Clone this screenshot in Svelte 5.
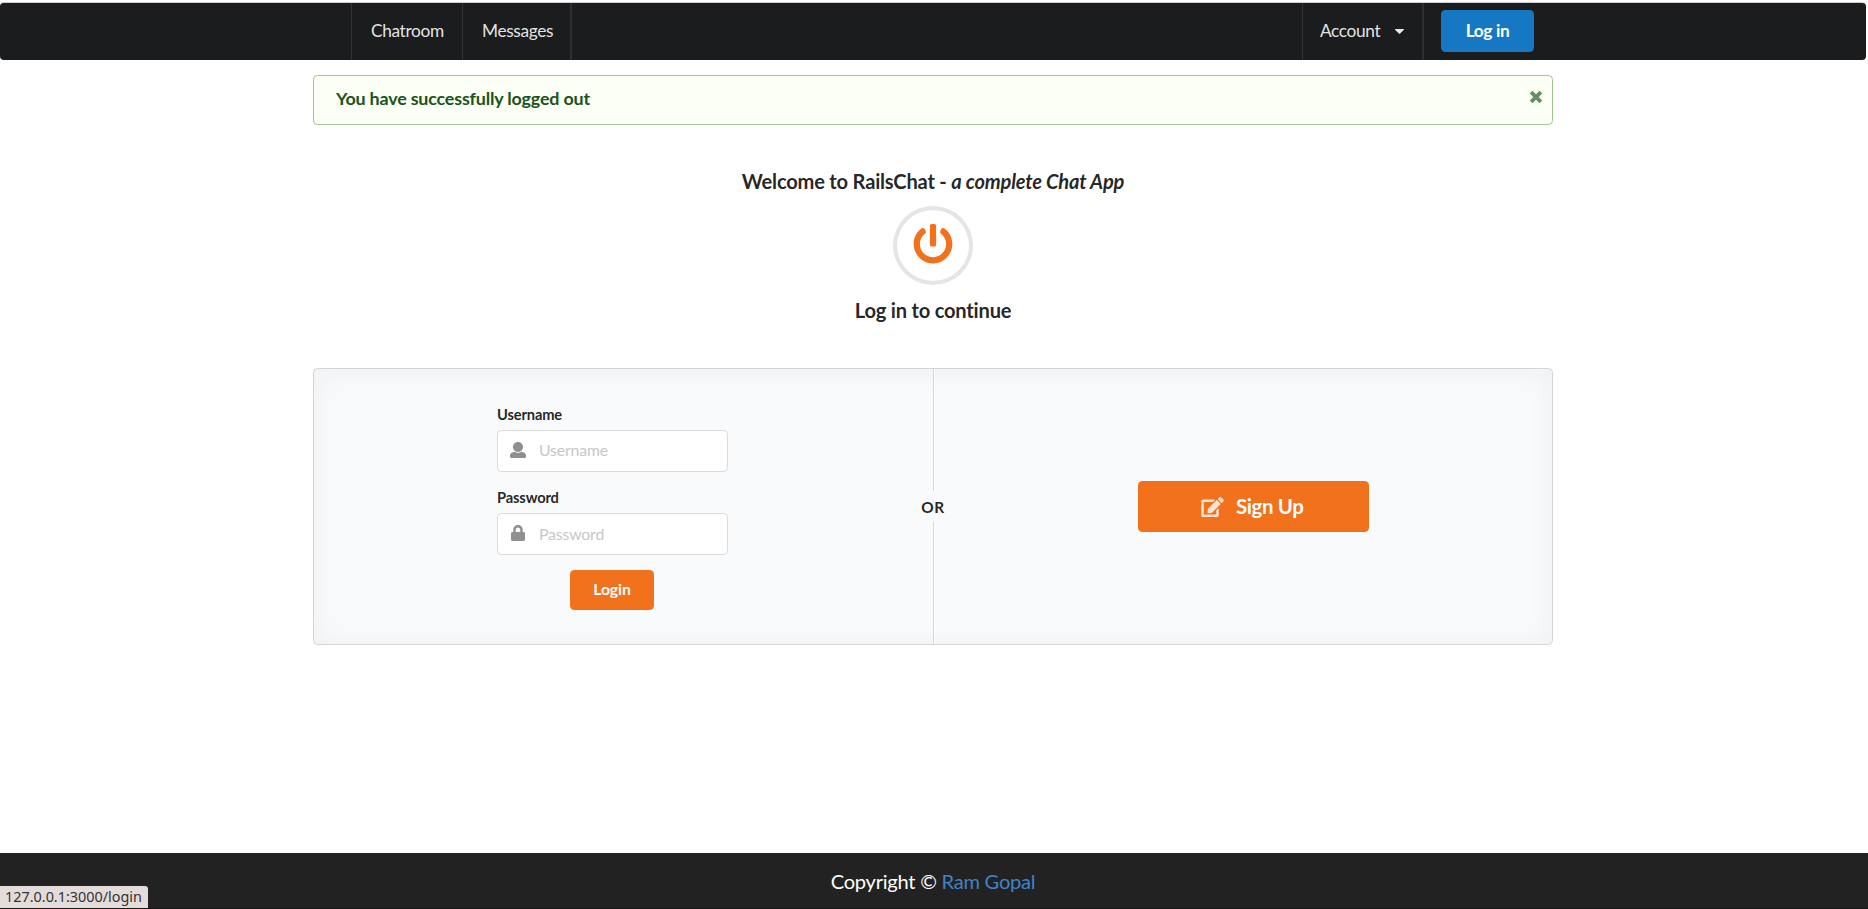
<script>
  let username = $state('');
  let password = $state('');
  const icons = {
    user: 'M256 0c88.366 0 160 71.634 160 160s-71.634 160-160 160S96 248.366 96 160 167.634 0 256 0zm183.283 333.821l-71.313-17.828c-74.923 53.89-165.738 41.864-223.94 0l-71.313 17.828C29.981 344.505 0 382.903 0 426.955V464c0 26.51 21.49 48 48 48h416c26.51 0 48-21.49 48-48v-37.045c0-44.052-29.981-82.45-72.717-93.134z',
    lock: 'M400 224h-24v-72C376 68.2 307.8 0 224 0S72 68.2 72 152v72H48c-26.5 0-48 21.5-48 48v192c0 26.5 21.5 48 48 48h352c26.5 0 48-21.5 48-48V272c0-26.5-21.5-48-48-48zm-104 0H152v-72c0-39.7 32.3-72 72-72s72 32.3 72 72v72z',
    edit: 'M402.6 83.2l90.2 90.2c3.8 3.8 3.8 10 0 13.8L274.4 405.6l-92.8 10.3c-12.4 1.4-22.9-9.1-21.5-21.5l10.3-92.8L388.8 83.2c3.8-3.8 10-3.8 13.8 0zm162-22.9l-48.8-48.8c-15.2-15.2-39.9-15.2-55.2 0l-35.4 35.4c-3.8 3.8-3.8 10 0 13.8l90.2 90.2c3.8 3.8 10 3.8 13.8 0l35.4-35.4c15.2-15.3 15.2-40 0-55.2zM384 346.2V448H64V128h229.8c3.2 0 6.2-1.3 8.5-3.5l40-40c7.6-7.6 2.2-20.5-8.5-20.5H48C21.5 64 0 85.5 0 112v352c0 26.5 21.5 48 48 48h352c26.5 0 48-21.5 48-48V306.2c0-10.7-12.9-16-20.5-8.5l-40 40c-2.2 2.3-3.5 5.3-3.5 8.5z',
    power: 'M400 54.1c63 45 104 118.6 104 201.9 0 136.8-110.8 247.7-247.5 248C120 504.3 8.2 393 8 256.4 7.9 173.1 48.9 99.3 111.8 54.2c11.7-8.3 28-4.8 35 7.7L162.6 90c5.9 10.5 3.1 23.8-6.6 31-41.5 30.8-68 79.6-68 134.9-.1 92.3 74.5 168.1 168 168.1 91.6 0 168.6-74.2 168-169.1-.3-51.8-24.7-101.8-68.1-134-9.7-7.2-12.4-20.5-6.5-30.9l15.8-28.1c7-12.4 23.2-16.1 34.8-7.8zM296 264V24c0-13.3-10.7-24-24-24h-32c-13.3 0-24 10.7-24 24v240c0 13.3 10.7 24 24 24h32c13.3 0 24-10.7 24-24z',
    close: 'M323.1 441l53.9-53.9c9.4-9.4 9.4-24.5 0-33.9L279.8 256l97.2-97.2c9.4-9.4 9.4-24.5 0-33.9L323.1 71c-9.4-9.4-24.5-9.4-33.9 0L192 168.2 94.8 71c-9.4-9.4-24.5-9.4-33.9 0L7 124.9c-9.4 9.4-9.4 24.5 0 33.9l97.2 97.2L7 353.2c-9.4 9.4-9.4 24.5 0 33.9L60.9 441c9.4 9.4 24.5 9.4 33.9 0l97.2-97.2 97.2 97.2c9.3 9.3 24.5 9.3 33.9 0z'
  };
</script>

<div class="page">
  <nav>
    <div class="menu">
      <span class="item chatroom">Chatroom</span>
      <span class="item messages">Messages</span>
      <span class="edge"></span>
      <span class="space"></span>
      <span class="item account">Account
        <svg class="caret" viewBox="0 0 9 5"><path d="M.6 0h7.8q1 .2.3 1L5.1 4.6q-.6.6-1.2 0L.3 1Q-.4.2.6 0z" /></svg>
      </span>
      <span class="edge"></span>
      <button class="signin">Log in</button>
    </div>
  </nav>

  <main>
    <div class="message">
      <span>You have successfully logged out</span>
      <svg class="close" viewBox="0 64 384 384"><path d={icons.close} /></svg>
    </div>

    <header>
      <h1>Welcome to RailsChat - <em>a complete Chat App</em></h1>
      <div class="ring"><svg viewBox="0 0 512 512"><path d={icons.power} /></svg></div>
      <h2>Log in to continue</h2>
    </header>

    <section>
      <form>
        <label for="username">Username</label>
        <div class="field">
          <svg class="user" viewBox="0 0 512 512"><path d={icons.user} /></svg>
          <input id="username" placeholder="Username" bind:value={username} />
        </div>
        <label for="password">Password</label>
        <div class="field">
          <svg class="lock" viewBox="0 0 448 512"><path d={icons.lock} /></svg>
          <input id="password" type="password" placeholder="Password" bind:value={password} />
        </div>
        <button class="login" type="button">Login</button>
      </form>
      <div class="divider"><i></i><b>OR</b><i></i></div>
      <div class="join">
        <button class="signup"><svg viewBox="0 0 576 512"><path d={icons.edit} /></svg><span>Sign Up</span></button>
      </div>
    </section>
  </main>

  <footer>
    <p>Copyright © <a href="#ram">Ram Gopal</a></p>
  </footer>
  <div class="status">127.0.0.1:3000/login</div>
</div>

<style>
  :global(body) { margin: 0; background: #fff; }
  .page, .page * { box-sizing: border-box; }
  .page {
    position: relative;
    display: flex;
    flex-direction: column;
    height: 909px;
    overflow: hidden;
    font: 15.4px/22px Lato, sans-serif;
    font-variant-ligatures: none;
    color: rgba(0, 0, 0, .87);
    border-top: 2px solid #fff;
  }
  svg { fill: currentColor; flex: none; }
  button { border: 0; padding: 0; border-radius: 4.4px; color: #fff; font: bold 15.8px/16px Lato, sans-serif; letter-spacing: -.15px; }
  nav {
    height: 58px;
    width: 1866px;
    border-top: 1px solid #d0cccd;
    background: #1b1c1d;
    border-radius: 4px;
  }
  .menu { display: flex; width: 1240px; height: 57px; margin: 0 auto; padding-left: 38px; }
  .item {
    display: flex;
    align-items: center;
    padding: 0 0 2px 19px;
    border-left: 1px solid #323334;
    color: rgba(255, 255, 255, .9);
    font-size: 17.3px;
    letter-spacing: -.35px;
  }
  .chatroom { width: 111px; }
  .messages { width: 108px; }
  .account { width: 120px; padding-left: 17px; }
  .caret { width: 9px; height: 5px; margin: 2px 0 0 15px; }
  .edge { width: 2px; background: #2d2e2f; }
  .space { flex: 1; }
  .signin { width: 93px; height: 42px; margin: 7px 19px 0 17px; background: #1678c2; font-size: 17.3px; letter-spacing: -.35px; padding-bottom: 1px; }
  main { width: 1240px; margin-left: 313px; flex: 1; }
  .message {
    display: flex;
    justify-content: space-between;
    height: 50px;
    margin-top: 15px;
    padding: 11px 10px 0 22px;
    border: 1px solid #a3c293;
    border-radius: 4.4px;
    background: #fcfff5;
    color: #1a531b;
    font-size: 17.9px;
    letter-spacing: -.18px;
    font-weight: bold;
  }
  .close { width: 12px; height: 12px; margin-top: 4px; opacity: .65; }
  header { display: flex; flex-direction: column; align-items: center; padding-top: 43px; }
  h1, h2 { margin: 0; font-size: 20.1px; line-height: 26px; letter-spacing: -.2px; }
  .ring {
    display: flex;
    justify-content: center;
    width: 80px;
    height: 79px;
    margin: 12px 0;
    padding-top: 14px;
    border: 4px solid #e5e5e5;
    border-radius: 50%;
    color: #f2711c;
  }
  .ring svg { width: 40px; height: 40px; }
  section {
    display: grid;
    grid-template-columns: 608px 24px 1fr;
    height: 277px;
    margin-top: 45px;
    border: 1px solid #d4d5d6;
    border-radius: 4.4px;
    background: #f9fafb;
    box-shadow: inset 0 2px 27.5px rgba(34, 36, 38, .05);
  }
  form { display: flex; flex-direction: column; padding: 35px 0 0 183px; }
  label { height: 26px; line-height: 20px; font-size: 14.7px; letter-spacing: -.15px; font-weight: bold; }
  .field {
    display: flex;
    align-items: center;
    width: 231px;
    height: 42px;
    margin-bottom: 15px;
    border: 1px solid #dadbdc;
    border-radius: 4.4px;
    background: #fff;
    color: #8f8f8f;
  }
  .field svg { width: 16px; height: 16px; margin: 0 13px 2px 12px; }
  .field .lock { width: 14px; margin: 0 14px 2px 13px; }
  input { width: 170px; padding: 0 0 2px; border: 0; outline: 0; background: none; font: 15.8px/20px Lato, sans-serif; letter-spacing: -.15px; }
  #password { padding-bottom: 1px; }
  input::placeholder { color: #c7c7c7; opacity: 1; }
  .login { width: 84px; height: 40px; margin-left: 73px; padding-bottom: 2px; background: #f2711c; }
  .divider { display: flex; flex-direction: column; align-items: center; }
  .divider i { flex: 1; width: 2px; border-left: 1px solid #d6d7d8; border-right: 1px solid #fff; }
  .divider b { height: 31px; line-height: 33px; margin-right: 2px; font-size: 15.4px; letter-spacing: .7px; }
  .join { display: flex; align-items: center; padding-left: 192px; }
  .signup {
    display: flex;
    align-items: center;
    width: 231px;
    height: 51px;
    padding-left: 63px;
    background: #f2711c;
    font-size: 20.4px;
    letter-spacing: -.35px;
  }
  .signup svg { width: 23px; height: 20px; margin-right: 12px; opacity: .8; }
  .signup span { padding-bottom: 2px; }
  footer { height: 56px; padding-top: 15px; border-bottom: 1px solid #161616; background: #222; text-align: center; }
  p { width: 1866px; margin: 0; color: #fff; font-size: 20.1px; letter-spacing: -.25px; line-height: 26px; }
  a { color: #4183c4; text-decoration: none; }
  .status {
    position: absolute;
    left: 0;
    bottom: 1px;
    width: 148px;
    height: 22px;
    padding-left: 5px;
    border-top-right-radius: 3px;
    background: #e4dcda;
    color: #333;
    font: 14.4px/22px "Noto Sans", sans-serif;
    white-space: nowrap;
  }
</style>
